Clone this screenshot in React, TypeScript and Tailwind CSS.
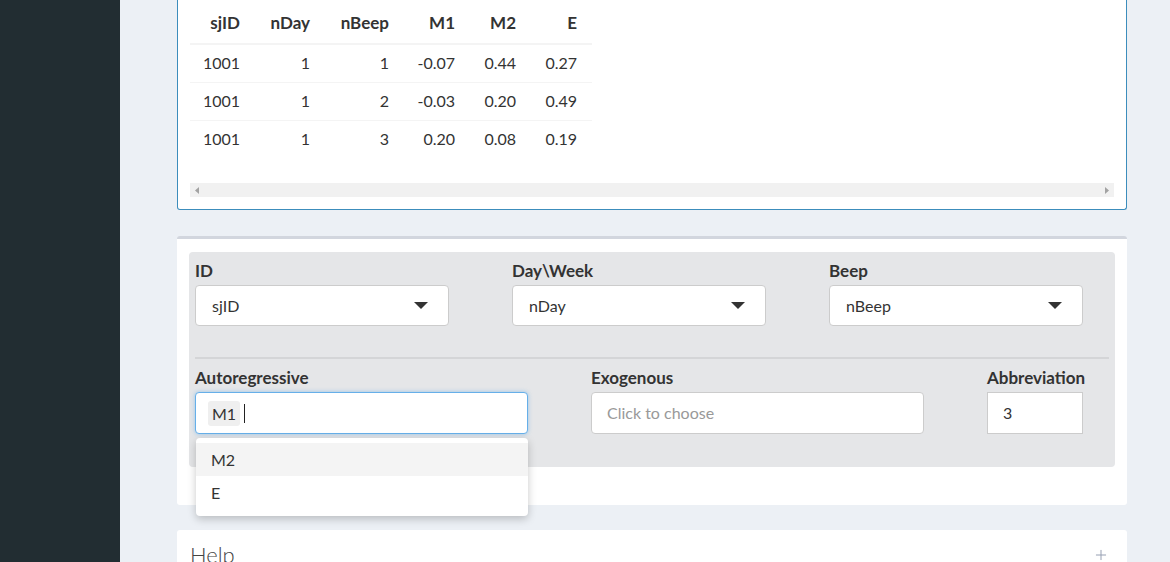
import { Plus } from 'lucide-react';

const rows = [
  ['1001', '1', '1', '-0.07', '0.44', '0.27'],
  ['1001', '1', '2', '-0.03', '0.20', '0.49'],
  ['1001', '1', '3', '0.20', '0.08', '0.19'],
];

// column widths taken from the preview table
const headers: [string, string][] = [
  ['sjID', 'w-[65px]'],
  ['nDay', 'w-[70px]'],
  ['nBeep', 'w-[79px]'],
  ['M1', 'w-[66px]'],
  ['M2', 'w-[61px]'],
  ['E', 'w-[61px]'],
];

function Caret() {
  return (
    <svg width="14" height="8" viewBox="0 0 14 8" className="text-[#333]">
      <path d="M0 0 L14 0 L7 7 Z" fill="currentColor" />
    </svg>
  );
}

function SelectBox({ value }: { value: string }) {
  return (
    <div className="flex h-[41px] w-[254px] items-center justify-between rounded-[4px] border border-[#cccccc] bg-white pl-[16px] pr-[20px] text-[16px] text-[#333]">
      <span>{value}</span>
      <Caret />
    </div>
  );
}

function Label({ children }: { children: React.ReactNode }) {
  return <div className="mb-[2px] h-[24px] text-[17px] font-bold leading-[24px] text-[#333]">{children}</div>;
}

export default function App() {
  return (
    <div className="flex min-h-screen font-['Lato',sans-serif] text-[#333]">
      <aside className="w-[120px] shrink-0 bg-[#222d32]" />

      <main className="flex-1 bg-[#ecf0f5] pl-[57px] pr-[43px] pb-10">
        {/* data preview box */}
        <section className="rounded-b-[3px] border border-t-0 border-[#3c8dbc] bg-white px-3 pt-[2px] pb-3">
          <div className="h-[181px]">
            <table className="table-fixed border-collapse text-[16px]">
              <thead>
                <tr className="h-[42px] border-b-2 border-[#f4f4f4]">
                  {headers.map(([h, w]) => (
                    <th key={h} className={`${w} whitespace-nowrap pr-[15px] text-right text-[17px] font-bold`}>
                      {h}
                    </th>
                  ))}
                </tr>
              </thead>
              <tbody>
                {rows.map((r, i) => (
                  <tr key={i} className={`h-[38px] ${i < 2 ? 'border-b border-[#f4f4f4]' : ''}`}>
                    {r.map((c, j) => (
                      <td key={j} className="pr-[15px] text-right">
                        {c}
                      </td>
                    ))}
                  </tr>
                ))}
              </tbody>
            </table>
          </div>
          <div className="flex h-[14px] items-center justify-between bg-[#f1f1f1] px-[5px]">
            <svg width="4" height="7" viewBox="0 0 4 7">
              <path d="M4 0 L0 3.5 L4 7 Z" fill="#a3a3a3" />
            </svg>
            <svg width="4" height="7" viewBox="0 0 4 7">
              <path d="M0 0 L4 3.5 L0 7 Z" fill="#a3a3a3" />
            </svg>
          </div>
        </section>

        {/* settings box */}
        <section className="mt-[26px] rounded-[3px] border-t-[3px] border-[#d2d6de] bg-white px-3 pt-[13px] pb-[38px]">
          <div className="rounded-[4px] bg-[#e5e6e8] px-[6px] pt-[7px] pb-[33px]">
            <div className="grid grid-cols-[317px_317px_1fr]">
              <div>
                <Label>ID</Label>
                <SelectBox value="sjID" />
              </div>
              <div>
                <Label>Day\Week</Label>
                <SelectBox value="nDay" />
              </div>
              <div>
                <Label>Beep</Label>
                <SelectBox value="nBeep" />
              </div>
            </div>

            <div className="mt-[31px] mb-[7px] border-t-2 border-[#d4d5d7]" />

            <div className="grid grid-cols-[396px_396px_1fr]">
              <div className="relative">
                <Label>Autoregressive</Label>
                <div className="flex h-[42px] w-[333px] items-center rounded-[4px] border border-[#66afe9] bg-white pl-[12px] shadow-[0_0_4px_rgba(102,175,233,0.6)]">
                  <span className="rounded-[3px] bg-[#efefef] px-[4px] py-[2px] text-[16px] leading-[21px] text-[#333]">M1</span>
                  <span className="ml-[4px] h-[19px] w-px bg-[#222]" />
                </div>
                <div className="absolute left-[1px] top-[72px] z-10 w-[332px] rounded-[4px] bg-white pt-[5px] pb-[6px] shadow-[0_3px_8px_rgba(0,0,0,0.22)]">
                  <div className="flex h-[33px] items-center bg-[#f4f4f4] pl-[15px] text-[16px]">M2</div>
                  <div className="flex h-[34px] items-center pl-[15px] text-[16px]">E</div>
                </div>
              </div>
              <div>
                <Label>Exogenous</Label>
                <div className="flex h-[42px] w-[333px] items-center rounded-[4px] border border-[#cccccc] bg-white pl-[15px] text-[16px] text-[#999]">
                  Click to choose
                </div>
              </div>
              <div>
                <Label>Abbreviation</Label>
                <div className="flex h-[42px] w-[96px] items-center border border-[#cccccc] bg-white pl-[15px] text-[16px]">3</div>
              </div>
            </div>
          </div>
        </section>

        {/* help box */}
        <section className="mt-[25px] flex items-center justify-between rounded-[3px] bg-white pl-[13px] pr-[18px] py-[8px]">
          <span className="text-[22px] font-light text-[#444]">Help</span>
          <Plus size={16} strokeWidth={1.5} className="text-[#97a0b3]" />
        </section>
      </main>
    </div>
  );
}
